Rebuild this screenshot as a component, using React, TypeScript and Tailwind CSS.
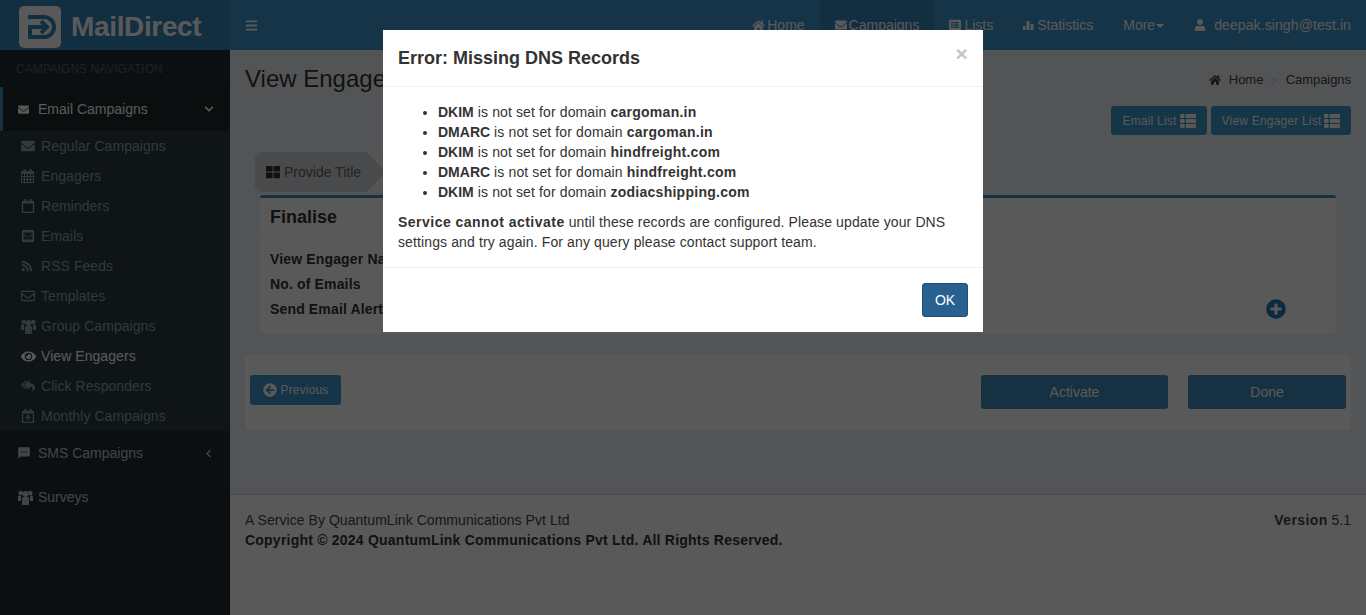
import type { ReactNode } from "react";
import {
  FaArrowCircleLeft,
  FaBars,
  FaChevronDown,
  FaChevronLeft,
  FaEnvelope,
  FaEnvelopeSquare,
  FaEye,
  FaHome,
  FaListAlt,
  FaPlusCircle,
  FaRegCalendar,
  FaRegCalendarPlus,
  FaRegEnvelope,
  FaReplyAll,
  FaRss,
  FaThLarge,
  FaThList,
  FaUser,
} from "react-icons/fa";
import { MdSms } from "react-icons/md";

function Logo() {
  return (
    <div className="flex h-[50px] w-[230px] shrink-0 items-center bg-[#3684ba] pl-[19px]">
      <svg width="42" height="42" viewBox="0 0 42 42" className="mt-[4px]">
        <rect width="42" height="42" rx="5" fill="#fff" />
        <path d="M9 11H25a10 10 0 0 1 0 20H11V21H28M22 15l6 6-6 6" fill="none" stroke="#3684ba" strokeWidth="4" />
      </svg>
      <span className="ml-[10px] mt-[4px] text-[28px] font-bold tracking-[-0.35px] text-white">MailDirect</span>
    </div>
  );
}

function NavItem({ icon, label, active, caret, wide }: { icon?: ReactNode; label: string; active?: boolean; caret?: boolean; wide?: boolean }) {
  return (
    <div className={`flex h-[50px] items-center px-[15px] text-[14px] text-white ${active ? "bg-[#3684ba]" : ""} ${wide ? "tracking-[0.1px]" : ""}`}>
      {icon}
      <span>{label}</span>
      {caret && <span className="ml-px mt-[2px] border-x-[4px] border-t-[4px] border-x-transparent border-t-white" />}
    </div>
  );
}

function StatsIcon() {
  return (
    <svg width="11" height="11" viewBox="0 0 11 11" className="mr-[3px]" fill="#fff">
      <rect x="0" y="6" width="2.500" height="4" />
      <rect x="3.500" y="1" width="3" height="9" />
      <rect x="7.500" y="4" width="3" height="6" />
    </svg>
  );
}

function UsersIcon({ className }: { className?: string }) {
  return (
    <svg width="15" height="15" viewBox="0 0 15 15" fill="currentColor" className={className}>
      <circle cx="7.500" cy="4" r="3" />
      <circle cx="2.700" cy="3" r="2.300" />
      <circle cx="12.300" cy="3" r="2.300" />
      <path d="M4 8.500Q4 7 5.500 7h4Q11 7 11 8.500V15H4z" />
      <path d="M0 7q0-1.500 1.500-1.500H3V11H0zM15 7q0-1.500-1.500-1.500H12V11h3z" />
    </svg>
  );
}

function GridCalendarIcon() {
  return (
    <svg width="13" height="14" viewBox="0 0 13 14" fill="currentColor">
      <path
        fillRule="evenodd"
        d="M0 2h2.500V0h2v2h4V0h2v2H13v12H0zM1 5v2h2V5zm3 0v2h2V5zm3 0v2h2V5zm3 0v2h2V5zM1 8v2h2V8zm3 0v2h2V8zm3 0v2h2V8zm3 0v2h2V8zM1 11v2h2v-2zm3 0v2h2v-2zm3 0v2h2v-2zm3 0v2h2v-2z"
      />
    </svg>
  );
}

function SubItem({ icon, label, active }: { icon: ReactNode; label: string; active?: boolean }) {
  return (
    <div className={`flex h-[30px] items-center pl-[21px] text-[14px] tracking-[0.06px] ${active ? "text-white" : "text-[#8aa4af]"}`}>
      <span className="flex w-[20px] shrink-0 items-center">{icon}</span>
      <span>{label}</span>
    </div>
  );
}

function Sidebar() {
  return (
    <aside className="w-[230px] shrink-0 bg-[#222d32] text-[14px]">
      <div className="flex h-[37px] items-center pl-[16px] text-[12px] text-[#4b646f]">CAMPAIGNS NAVIGATION</div>
      <div className="flex h-[44px] items-center border-l-[3px] border-[#3c8dbc] bg-[#1e282c] pl-[15px] pr-[16px] text-white">
        <FaEnvelope className="mr-[9px] w-[11px] shrink-0" size={11} />
        <span>Email Campaigns</span>
        <FaChevronDown className="ml-auto" size={10} />
      </div>
      <div className="bg-[#2c3b41]">
        <SubItem icon={<FaEnvelope size={14} />} label="Regular Campaigns" />
        <SubItem icon={<GridCalendarIcon />} label="Engagers" />
        <SubItem icon={<FaRegCalendar size={14} />} label="Reminders" />
        <SubItem icon={<FaEnvelopeSquare size={14} />} label="Emails" />
        <SubItem icon={<FaRss size={12} />} label="RSS Feeds" />
        <SubItem icon={<FaRegEnvelope size={14} />} label="Templates" />
        <SubItem icon={<UsersIcon />} label="Group Campaigns" />
        <SubItem active icon={<FaEye size={15} />} label="View Engagers" />
        <SubItem icon={<FaReplyAll size={14} />} label="Click Responders" />
        <SubItem icon={<FaRegCalendarPlus size={14} />} label="Monthly Campaigns" />
      </div>
      <div className="flex h-[44px] items-center pl-[17px] pr-[17px] text-[#b8c7ce]">
        <MdSms className="mr-[7px]" size={14} />
        <span>SMS Campaigns</span>
        <FaChevronLeft className="ml-auto" size={9} />
      </div>
      <div className="flex h-[44px] items-center pl-[18px] text-[#b8c7ce]">
        <UsersIcon className="mr-[5px]" />
        <span>Surveys</span>
      </div>
    </aside>
  );
}

function Row({ label }: { label: string }) {
  return <div className="flex h-[25px] items-center whitespace-nowrap font-bold tracking-[0.15px] text-[#333]">{label}</div>;
}

function Domain({ name }: { name: string }) {
  return <b className="tracking-[0.27px]">{name}</b>;
}

function Modal() {
  return (
    <div className="fixed inset-0 bg-black/65">
      <div className="mx-auto mt-[30px] w-[600px] bg-white text-[14px] leading-[20px] tracking-[0.12px] text-[#333]">
        <div className="flex h-[57px] items-center justify-between border-b border-[#f0f0f0] px-[15px]">
          <h4 className="text-[18px] font-bold tracking-normal">Error: Missing DNS Records</h4>
          <span className="-mt-[8px] text-[21px] font-bold text-[#c4c4c4]">×</span>
        </div>
        <div className="h-[180px] px-[15px] pt-[15px]">
          <ul className="mb-[10px] list-disc pl-[40px]">
            <li><b className="tracking-normal">DKIM</b> is not set for domain <Domain name="cargoman.in" /></li>
            <li><b className="tracking-normal">DMARC</b> is not set for domain <Domain name="cargoman.in" /></li>
            <li><b className="tracking-normal">DKIM</b> is not set for domain <Domain name="hindfreight.com" /></li>
            <li><b className="tracking-normal">DMARC</b> is not set for domain <Domain name="hindfreight.com" /></li>
            <li><b className="tracking-normal">DKIM</b> is not set for domain <Domain name="zodiacshipping.com" /></li>
          </ul>
          <p>
            <b className="tracking-[0.48px]">Service cannot activate</b> until these records are configured. Please update your DNS settings and try
            again. For any query please contact support team.
          </p>
        </div>
        <div className="flex h-[65px] items-center justify-end border-t border-[#f0f0f0] px-[15px]">
          <button className="h-[34px] w-[46px] rounded-[3px] border border-[#204d74] bg-[#286090] tracking-normal text-white">OK</button>
        </div>
      </div>
    </div>
  );
}

export default function App() {
  return (
    <div className="flex min-h-[615px] flex-col font-['Liberation_Sans',Arial,sans-serif]">
      <header className="flex h-[50px] bg-[#3c94cc]">
        <Logo />
        <div className="flex flex-1 items-center">
          <FaBars className="ml-[15px] text-white" size={13} />
          <nav className="ml-auto flex items-center">
            <NavItem icon={<FaHome className="mr-[2px]" size={13} />} label="Home" />
            <NavItem active icon={<FaEnvelope className="mr-[2px]" size={12} />} label="Campaigns" />
            <NavItem icon={<FaListAlt className="mr-[3px]" size={12} />} label="Lists" />
            <NavItem icon={<StatsIcon />} label="Statistics" />
            <NavItem label="More" caret />
            <NavItem wide icon={<FaUser className="mr-[8px]" size={12} />} label="deepak.singh@test.in" />
          </nav>
        </div>
      </header>
      <div className="flex flex-1">
        <Sidebar />
        <main className="flex min-w-0 flex-1 flex-col bg-[#ecf0f5]">
          <div className="flex-1 px-[15px]">
            <div className="flex items-center justify-between pt-[15px]">
              <h1 className="text-[24px] leading-[28px] text-[#333]">View Engagers</h1>
              <div className="mt-[2px] flex items-center text-[13px] tracking-[-0.05px] text-[#444]">
                <FaHome size={12} className="mr-[8px]" />
                <span>Home</span>
                <span className="mx-[8px] text-[11px] text-[#c4c8cc]">&gt;</span>
                <span>Campaigns</span>
              </div>
            </div>
            <div className="mt-[13px] flex justify-end gap-[4px]">
              <button className="flex h-[29px] w-[96px] items-center justify-center gap-[3px] rounded-[3px] bg-[#3c9ac8] text-[12px] tracking-[0.2px] text-white">
                Email List <FaThList size={16} />
              </button>
              <button className="flex h-[29px] w-[140px] items-center justify-center gap-[3px] rounded-[3px] bg-[#3c9ac8] text-[12px] tracking-[0.2px] text-white">
                View Engager List <FaThList size={16} />
              </button>
            </div>
            <div className="relative ml-[10px] mt-[17px] h-[40px] w-[133px]">
              <div className="flex h-full items-center bg-[#d2d4d6] pl-[11px] text-[14px] text-[#666] [clip-path:polygon(4px_0,113px_0,133px_50%,113px_100%,4px_100%,0_90%,0_10%)]">
                <FaThLarge size={14} className="mr-[4px] text-[#333]" />
                Provide Title
              </div>
              <svg width="140" height="40" viewBox="0 0 140 40" fill="none" className="absolute left-0 top-0">
                <path d="M113 0L133 20L113 40" stroke="#fff" strokeOpacity="0.6" strokeWidth="3" />
              </svg>
            </div>
            <section className="mx-[15px] mt-[3px] h-[139px] rounded-[3px] border-t-[3px] border-[#3c8dbc] bg-white text-[14px]">
              <div className="flex h-[41px] items-center border-b border-[#f4f4f4] pb-[2px] pl-[10px] text-[18px] font-bold text-[#333]">
                Finalise
              </div>
              <div className="relative pl-[10px] pt-[8px]">
                <Row label="View Engager Name" />
                <Row label="No. of Emails" />
                <Row label="Send Email Alert" />
                <FaPlusCircle className="absolute right-[50px] top-[60px] text-[#1f78b4]" size={20} />
              </div>
            </section>
            <div className="mt-[21px] flex h-[75px] items-start rounded-[3px] bg-white pt-[20px]">
              <button className="ml-[5px] flex h-[30px] w-[91px] items-center justify-center gap-[4px] rounded-[3px] bg-[#3c94cc] text-[12px] tracking-[0.15px] text-white">
                <FaArrowCircleLeft size={14} /> Previous
              </button>
              <button className="ml-auto h-[34px] w-[187px] rounded-[3px] bg-[#3c8dbc] text-[14px] text-white">Activate</button>
              <button className="ml-[20px] mr-[5px] h-[34px] w-[158px] rounded-[3px] bg-[#3c8dbc] text-[14px] text-white">Done</button>
            </div>
          </div>
          <footer className="flex h-[121px] justify-between border-t border-[#d2d6de] bg-white px-[15px] pt-[15px] text-[14px] leading-[20px] text-[#444]">
            <div className="tracking-[0.05px]">
              <div>A Service By QuantumLink Communications Pvt Ltd</div>
              <b className="tracking-[0.22px] text-[#333]">Copyright © 2024 QuantumLink Communications Pvt Ltd. All Rights Reserved.</b>
            </div>
            <div><b className="tracking-[0.4px]">Version</b> 5.1</div>
          </footer>
        </main>
      </div>
      <Modal />
    </div>
  );
}
